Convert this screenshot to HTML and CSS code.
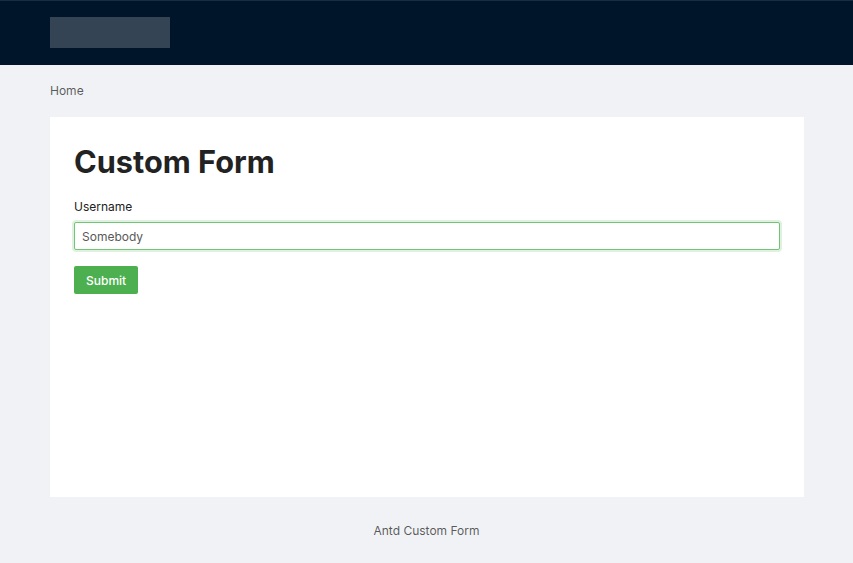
FILE: index.html
```html
<!DOCTYPE html>
<html lang="en">
<head>
    <meta charset="UTF-8">
    <meta name="viewport" content="width=device-width, initial-scale=1.0">
    <title>Antd Custom Form</title>
    <link rel="stylesheet" href="styles.css">
</head>
<body>
<div class="layout">
    <header class="header">
        <div class="logo"></div>
    </header>

    <main class="main">
        <div class="breadcrumb">Home</div>

        <div class="content">
            <h1>Custom Form</h1>
            <form id="customForm">
                <label for="username">Username</label>
                <input type="text" id="username" class="focused" value="Somebody">
                <button type="button" class="submit-button">Submit</button>
            </form>
        </div>
    </main>

    <footer class="footer">Antd Custom Form</footer>
</div>
</body>
</html>
```

FILE: styles.css
```css
body {
    font-family: Inter, "Helvetica Neue", Arial, sans-serif;
    margin: 0;
    padding: 0;
    background-color: #f0f2f5;
    color: rgba(0, 0, 0, 0.85);
    font-size: 12px;
}
.layout {
    min-height: 563px;
    display: flex;
    flex-direction: column;
}
.header {
    height: 65px;
    padding: 0 50px;
    background-color: #001529;
    border-top: 1px solid #1b2b40;
    box-sizing: border-box;
    display: flex;
    align-items: flex-start;
}
.logo {
    width: 120px;
    height: 31px;
    margin-top: 16px;
    background: #344454;
}
.main {
    padding: 0 49px 0 50px;
}
.breadcrumb {
    margin: 16px 0;
    line-height: 20px;
    color: rgba(0, 0, 0, 0.65);
}
.content {
    background: #fff;
    padding: 24px;
    min-height: 332px;
}
h1 {
    margin: 0 0 17px;
    font-size: 30.7px;
    font-weight: 700;
    line-height: 41px;
    color: #222;
}
label {
    display: block;
    line-height: 16px;
    margin-bottom: 7px;
    color: #222;
}
input {
    display: block;
    width: 100%;
    box-sizing: border-box;
    height: 28px;
    padding: 4px 7px;
    margin-bottom: 16px;
    font-family: inherit;
    font-size: 12px;
    color: #595959;
    border: 1px solid #ccc;
    border-radius: 2px;
    outline: none;
}
input.focused {
    border-color: #74c477;
    box-shadow: 0 0 0 2px rgba(76, 175, 80, 0.18);
}
.submit-button {
    display: block;
    height: 28px;
    padding: 0 12px;
    font-family: inherit;
    font-size: 12px;
    font-weight: 500;
    color: #fff;
    background-color: #4caf50;
    border: none;
    border-radius: 2px;
    cursor: pointer;
}
.submit-button:hover {
    opacity: 0.8;
}
.footer {
    padding: 23px 50px 21px;
    text-align: center;
    line-height: 22px;
    color: rgba(0, 0, 0, 0.65);
}
```
